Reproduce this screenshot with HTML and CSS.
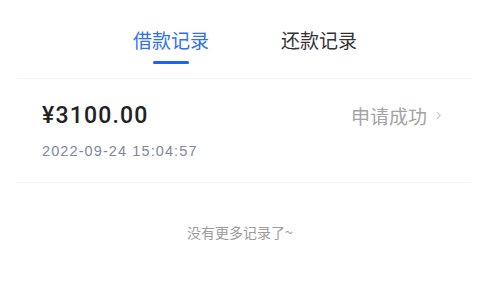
FILE: index.html
```html
<!DOCTYPE html>
<html lang="zh-CN">
<head>
    <meta charset="UTF-8">
    <meta name="viewport" content="width=device-width, initial-scale=1.0">
    <title>借款记录</title>
    <link rel="stylesheet" href="styles.css">
</head>
<body>
    <div class="tabs">
        <div class="tab active">借款记录</div>
        <div class="tab">还款记录</div>
    </div>
    <div class="list">
        <div class="record">
            <div class="record-top">
                <span class="amount">¥3100.00</span>
                <span class="status">申请成功
                    <svg class="arrow" width="5" height="9" viewBox="0 0 5 9"><path d="M0.8 0.8l3.4 3.7-3.4 3.7" fill="none" stroke="#c4c4c4" stroke-width="1.1"/></svg>
                </span>
            </div>
            <div class="date">2022-09-24 15:04:57</div>
        </div>
    </div>
    <p class="no-more">没有更多记录了~</p>
</body>
</html>
```
FILE: styles.css
```css
body {
    margin: 0;
    padding: 0;
    background: #fff;
    font-family: "Noto Sans CJK SC", "Noto Sans", sans-serif;
    width: 480px;
}
.tabs {
    display: flex;
    justify-content: center;
    gap: 72px;
    padding-top: 24px;
    margin: 0 8px 0 18px;
    height: 54px;
    border-bottom: 1px solid #f3f3f3;
}
.tab {
    position: relative;
    font-size: 19px;
    line-height: 32px;
    color: #333;
    height: 40px;
}
.tab.active {
    color: #2f6ff0;
}
.tab.active::after {
    content: "";
    position: absolute;
    left: 50%;
    top: 37px;
    width: 36px;
    height: 3px;
    margin-left: -18px;
    border-radius: 2px;
    background: #1f64f0;
}
.list {
    margin: 0 10px 0 17px;
    border-bottom: 1px solid #f3f3f3;
}
.record {
    padding: 23px 29px 23px 25px;
}
.record-top {
    display: flex;
    justify-content: space-between;
    align-items: center;
}
.amount {
    font-family: Roboto, "Liberation Sans", sans-serif;
    font-size: 23px;
    font-weight: 500;
    letter-spacing: 1.2px;
    color: #222;
}
.status {
    font-size: 19px;
    color: #a3a3a3;
    display: flex;
    align-items: center;
    gap: 9px;
}
.date {
    margin-top: 14px;
    font-family: "Liberation Sans", Arial, sans-serif;
    font-size: 14.5px;
    letter-spacing: 1.1px;
    color: #7f889c;
}
.no-more {
    margin: 39px 0 0;
    text-align: center;
    font-size: 14px;
    color: #9c9c9c;
}
```
